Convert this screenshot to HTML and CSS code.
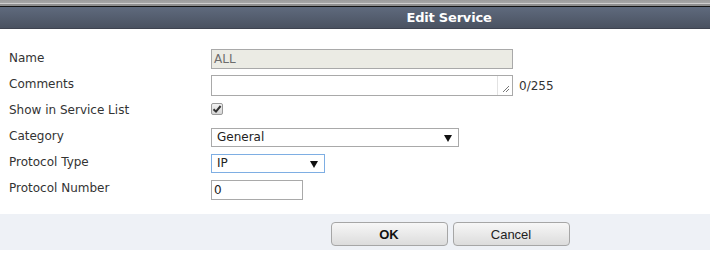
FILE: index.html
```html
<!DOCTYPE html>
<html lang="en">
<head>
  <meta charset="UTF-8" />
  <title>Edit Service</title>
  <link rel="stylesheet" href="styles.css">
</head>
<body>
  <div class="dialog">
    <div class="top-strip"></div>
    <div class="title-bar">Edit Service</div>

    <div class="form">
      <div class="row">
        <span class="label">Name</span>
        <div class="field"><div class="input input-disabled wide">ALL</div></div>
      </div>
      <div class="row">
        <span class="label">Comments</span>
        <div class="field">
          <div class="input wide textarea">
            <span class="grip">
              <svg width="8" height="8" viewBox="0 0 8 8"><path d="M7 1L1 7M7 4L4 7" stroke="#777" stroke-width="1" fill="none"/></svg>
            </span>
          </div>
          <span class="counter">0/255</span>
        </div>
      </div>
      <div class="row">
        <span class="label">Show in Service List</span>
        <div class="field">
          <span class="checkbox">
            <svg width="10" height="10" viewBox="0 0 10 10"><path d="M1.5 5.2L4 7.6L8.6 2" stroke="#333" stroke-width="2" fill="none"/></svg>
          </span>
        </div>
      </div>
      <div class="row">
        <span class="label">Category</span>
        <div class="field">
          <div class="input select category">General<span class="arrow"></span></div>
        </div>
      </div>
      <div class="row">
        <span class="label">Protocol Type</span>
        <div class="field">
          <div class="input select focused proto">IP<span class="arrow"></span></div>
        </div>
      </div>
      <div class="row">
        <span class="label">Protocol Number</span>
        <div class="field"><div class="input number">0</div></div>
      </div>
    </div>

    <div class="footer">
      <button class="btn btn-primary">OK</button>
      <button class="btn">Cancel</button>
    </div>
  </div>
</body>
</html>
```

FILE: styles.css
```css
body {
  margin: 0;
  background: #fff;
  overflow: hidden;
  font-family: 'DejaVu Sans', Verdana, sans-serif;
  font-size: 12px;
  color: #333;
}

.dialog {
  width: 100%;
}

.top-strip {
  height: 6px;
  background: linear-gradient(#9c9c9c 0, #a6a6a6 3px, #cfcfcf 3px, #cfcfcf 4px, #8e8e8e 4px);
  border-bottom: 1px solid #151515;
}

.title-bar {
  height: 21px;
  line-height: 21px;
  padding-left: 188px;
  text-align: center;
  color: #fff;
  font-weight: bold;
  font-size: 13px;
  letter-spacing: -0.2px;
  background: linear-gradient(#5f6a7d, #4a5261);
  border-bottom: 1px solid #3e4350;
}

.form {
  padding: 17px 0 12px 9px;
}

.row {
  display: grid;
  grid-template-columns: 202px 1fr;
  align-items: center;
  height: 26px;
}

.label {
  padding-bottom: 2px;
  color: #333;
}

.field {
  display: flex;
  align-items: center;
  gap: 6px;
}

.input {
  box-sizing: border-box;
  height: 20px;
  border: 1px solid #a9a9a9;
  background: #fff;
  padding: 0 4px;
  line-height: 18px;
  color: #222;
  position: relative;
}

.wide {
  width: 302px;
}

.input-disabled {
  background: #ebebe4;
  color: #6d6d6d;
  padding-left: 2px;
}

.textarea {
  height: 21px;
}

.grip {
  position: absolute;
  right: 0;
  top: 0;
  bottom: 0;
  width: 15px;
  border-left: 1px solid #e2e2e2;
  display: flex;
  align-items: flex-end;
  justify-content: flex-end;
  padding: 0 2px 2px 0;
  box-sizing: border-box;
}

.grip svg {
  display: block;
}

.counter {
  color: #333;
  padding-top: 2px;
}

.checkbox {
  box-sizing: border-box;
  width: 12px;
  height: 12px;
  margin-bottom: 4px;
  border: 1px solid #9a9a9a;
  border-radius: 2px;
  background: linear-gradient(#f2f2f2, #d6d6d6);
  display: flex;
  align-items: center;
  justify-content: center;
}

.checkbox svg {
  display: block;
}

.select {
  font-size: 12px;
  padding-left: 5px;
}

.category {
  width: 248px;
  height: 19px;
  line-height: 17px;
  margin-top: 1px;
}

.proto {
  width: 114px;
  height: 19px;
  line-height: 17px;
}

.focused {
  border-color: #7eaee3;
}

.arrow {
  position: absolute;
  right: 6px;
  top: 6px;
  width: 0;
  height: 0;
  border-left: 4px solid transparent;
  border-right: 4px solid transparent;
  border-top: 7px solid #111;
}

.number {
  width: 92px;
  padding-left: 2px;
  margin-top: 2px;
}

.footer {
  height: 36px;
  box-sizing: border-box;
  padding: 8px 0 0 190px;
  background: #eef1f6;
  display: flex;
  align-items: flex-start;
  justify-content: center;
  gap: 5px;
}

.btn {
  width: 117px;
  height: 24px;
  border: 1px solid #a6a6a6;
  border-radius: 4px;
  background: linear-gradient(#f7f7f7, #dcdcdc);
  font-family: 'Liberation Sans', Arial, sans-serif;
  font-size: 13px;
  color: #222;
  padding: 0;
}

.btn-primary {
  font-weight: bold;
  color: #111;
}
```
